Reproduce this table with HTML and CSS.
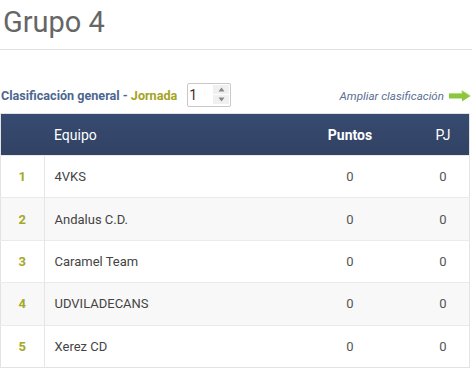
FILE: index.html
```html
<!DOCTYPE html>
<html lang="es">
<head>
<meta charset="utf-8">
<link rel="stylesheet" href="styles.css">
</head>
<body>
<div class="page">
  <h1 class="title">Grupo 4</h1>
  <div class="toolbar">
    <div class="label">
      <span class="lbl-main">Clasificación general - </span><span class="lbl-j">Jornada</span>
      <div class="spin">
        <span class="spin-val">1</span>
        <span class="spin-btns">
          <span class="spin-btn"><svg width="7" height="5" viewBox="0 0 7 5"><path d="M3.5 0.5 L6.5 4.5 L0.5 4.5Z" fill="#888"/></svg></span>
          <span class="spin-btn"><svg width="7" height="5" viewBox="0 0 7 5"><path d="M0.5 0.5 L6.5 0.5 L3.5 4.5Z" fill="#888"/></svg></span>
        </span>
      </div>
    </div>
    <a class="more">Ampliar clasificación
      <svg class="arrow" width="22" height="12" viewBox="0 0 22 12"><path d="M0 3.5 H13 V0.5 L21.5 6 L13 11.5 V8.5 H0Z" fill="#8cc63f"/><path d="M0 3.5 H13 V0.5 L21.5 6" fill="none" stroke="#b5e07a" stroke-width="1"/></svg>
    </a>
  </div>
  <table class="standings">
    <thead>
      <tr><th class="c-pos"></th><th class="c-team">Equipo</th><th class="c-pts">Puntos</th><th class="c-pj">PJ</th></tr>
    </thead>
    <tbody>
      <tr><td class="c-pos">1</td><td class="c-team">4VKS</td><td class="c-pts">0</td><td class="c-pj">0</td></tr>
      <tr class="alt"><td class="c-pos">2</td><td class="c-team">Andalus C.D.</td><td class="c-pts">0</td><td class="c-pj">0</td></tr>
      <tr><td class="c-pos">3</td><td class="c-team">Caramel Team</td><td class="c-pts">0</td><td class="c-pj">0</td></tr>
      <tr class="alt"><td class="c-pos">4</td><td class="c-team">UDVILADECANS</td><td class="c-pts">0</td><td class="c-pj">0</td></tr>
      <tr><td class="c-pos">5</td><td class="c-team">Xerez CD</td><td class="c-pts">0</td><td class="c-pj">0</td></tr>
    </tbody>
  </table>
</div>
</body>
</html>
```
FILE: styles.css
```css
html, body {
  margin: 0;
  padding: 0;
  background: #fff;
}
body {
  font-family: Roboto, "Liberation Sans", sans-serif;
  color: #444;
}
.page {
  padding: 0 1px 0 1px;
}
.title {
  margin: 0 -1px 0 -1px;
  padding: 4px 0 0 3px;
  font-size: 29px;
  font-weight: 400;
  line-height: 36px;
  color: #666;
  height: 45px;
  border-bottom: 1px solid #e2e2e2;
}
.toolbar {
  display: flex;
  justify-content: space-between;
  align-items: center;
  margin-top: 33px;
  height: 24px;
  margin-bottom: 6px;
}
.label {
  display: flex;
  align-items: center;
  font-size: 12.6px;
  font-weight: 700;
  white-space: pre;
}
.lbl-main { color: #4d6690; }
.lbl-j { color: #a5a323; }
.spin {
  margin-left: 10px;
  width: 42px;
  height: 22px;
  border: 1px solid #c8c8c8;
  border-radius: 2px;
  display: flex;
  background: #fff;
}
.spin-val {
  flex: 1;
  font-size: 14px;
  font-weight: 400;
  color: #333;
  line-height: 22px;
  padding-left: 1px;
}
.spin-btns {
  width: 16px;
  display: flex;
  flex-direction: column;
  margin: 1px 1px 1px 0;
}
.spin-btn {
  flex: 1;
  background: #f0f0f0;
  display: flex;
  align-items: center;
  justify-content: center;
  border-bottom: 1px solid #fff;
}
.more {
  font-size: 11.6px;
  font-style: italic;
  color: #5b6f92;
  display: flex;
  align-items: center;
  gap: 5px;
  padding-top: 2px;
}
.standings {
  width: 470px;
  margin-left: -1px;
  border-collapse: collapse;
  font-size: 13px;
  border: 1px solid #e3e3e3;
  table-layout: fixed;
}
.standings thead tr {
  background: #334468;
  background-image: linear-gradient(180deg, #374a70 0%, #314263 100%);
  height: 42px;
}
.standings th {
  color: #fff;
  font-weight: 400;
  font-size: 14px;
  text-align: left;
  padding: 0;
}
.standings th.c-pts { font-weight: 700; text-align: center; }
.standings th.c-pj { text-align: center; }
.standings tbody tr {
  height: 42.4px;
  border-top: 1px solid #eaeaea;
}
.standings tbody tr.alt { background: #f8f8f8; }
.standings td {
  padding: 0;
  color: #444;
}
.c-pos {
  width: 43px;
  text-align: center;
  border-right: 1px solid #e6e6e6;
}
.standings td.c-pos {
  color: #a4a925;
  font-weight: 700;
}
.standings th.c-pos { border-right: none; }
.c-team { padding-left: 10px !important; }
.standings .c-pts { width: 134px; text-align: center; color: #555; }
.standings th.c-pts { color: #fff; }
.standings .c-pj { width: 52px; text-align: center; color: #555; }
.standings th.c-pj { color: #fff; }
```
